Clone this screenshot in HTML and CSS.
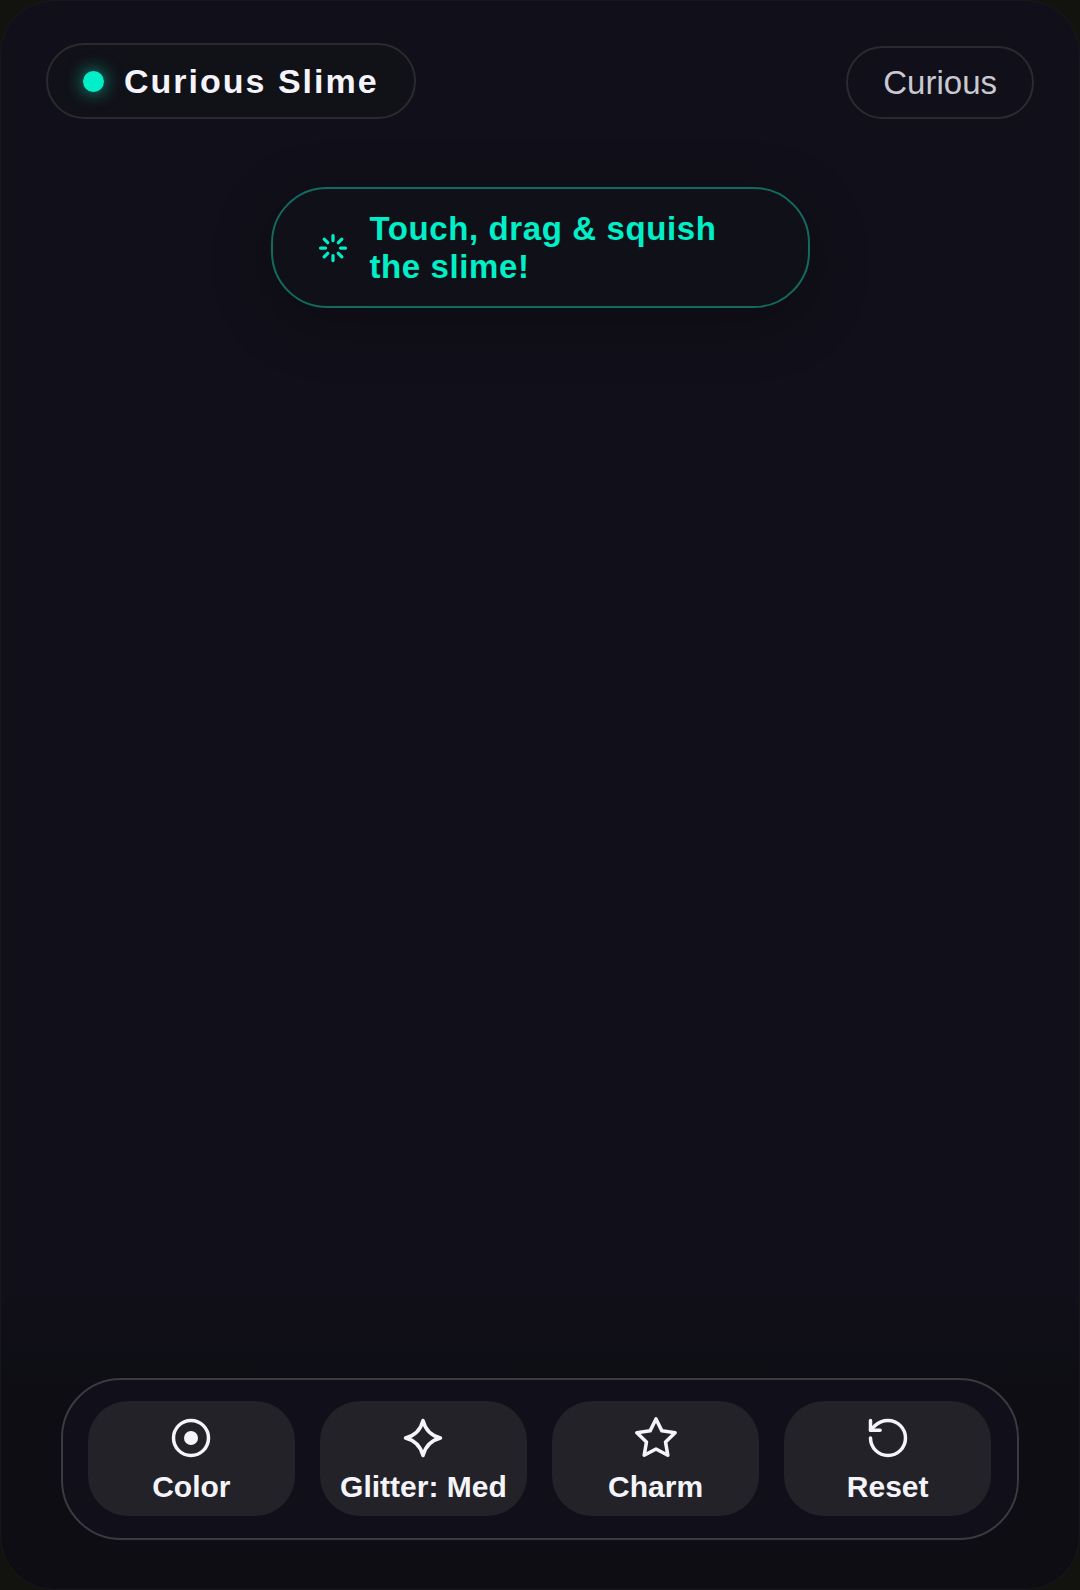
FILE: index.html
```html
<!DOCTYPE html>
<html lang="en">
<head>
    <meta charset="UTF-8">
    <meta name="viewport" content="width=device-width, initial-scale=1.0">
    <title>Curious Slime</title>
    <link rel="stylesheet" href="styles.css">
</head>
<body>

<div class="frame">
    <div class="top">
        <div class="name-pill">
            <span class="dot"></span>
            <span class="name">Curious Slime</span>
        </div>
        <div class="mood-pill">Curious</div>
    </div>

    <div class="hint">
        <svg class="hint-icon" viewBox="0 0 24 24" fill="none" stroke="currentColor" stroke-width="2.6" stroke-linecap="round">
            <path d="M12 2v4"/>
            <path d="M12 18v4"/>
            <path d="M4.93 4.93l2.83 2.83"/>
            <path d="M16.24 16.24l2.83 2.83"/>
            <path d="M2 12h4"/>
            <path d="M18 12h4"/>
            <path d="M4.93 19.07l2.83-2.83"/>
            <path d="M16.24 7.76l2.83-2.83"/>
        </svg>
        <span class="hint-text">Touch, drag &amp; squish the slime!</span>
    </div>

    <div class="toolbar">
        <button class="tool">
            <svg class="tool-icon" viewBox="0 0 24 24" fill="none" stroke="currentColor" stroke-width="2" stroke-linecap="round" stroke-linejoin="round">
                <circle cx="12" cy="12" r="10"/>
                <circle cx="12" cy="12" r="4" fill="currentColor" stroke="none"/>
            </svg>
            Color
        </button>
        <button class="tool">
            <svg class="tool-icon" viewBox="0 0 24 24" fill="none" stroke="currentColor" stroke-width="2" stroke-linecap="round" stroke-linejoin="round">
                <path d="M12 2Q14 10 22 12Q14 14 12 22Q10 14 2 12Q10 10 12 2Z"/>
            </svg>
            Glitter: Med
        </button>
        <button class="tool">
            <svg class="tool-icon" viewBox="1 1 22 22" fill="none" stroke="currentColor" stroke-width="1.85" stroke-linecap="round" stroke-linejoin="round">
                <path d="M12 2l3.09 6.26L22 9.27l-5 4.87 1.18 6.88L12 17.77l-6.18 3.25L7 14.14 2 9.27l6.91-1.01L12 2z"/>
            </svg>
            Charm
        </button>
        <button class="tool">
            <svg class="tool-icon" viewBox="0 0 24 24" fill="none" stroke="currentColor" stroke-width="2" stroke-linecap="round" stroke-linejoin="round">
                <path d="M2 12a10 10 0 1 0 10-10 10.8 10.8 0 0 0-7.5 3L2 7.5"/>
                <path d="M2 2v5.5h5.5"/>
            </svg>
            Reset
        </button>
    </div>
</div>

</body>
</html>
```

FILE: styles.css
```css
* {
    box-sizing: border-box;
}
html, body {
    margin: 0;
    height: 100%;
    background-color: #12120f;
}
body {
    font-family: "Liberation Sans", Arial, sans-serif;
}
.frame {
    display: flex;
    flex-direction: column;
    height: 1590px;
    padding: 42px 45px 49px 45px;
    border-radius: 54px;
    border: 1px solid #18181c;
    background: linear-gradient(to bottom, #11101a 0%, #11101a 81%, #0d0d13 88%, #0d0d13 100%);
    overflow: hidden;
}
.top {
    display: flex;
    justify-content: space-between;
    align-items: flex-end;
}
.name-pill {
    display: flex;
    align-items: center;
    gap: 20px;
    height: 76px;
    padding: 0 35px 0 35px;
    border: 2px solid #2a2a30;
    border-radius: 38px;
    background-color: #111118;
}
.dot {
    width: 21px;
    height: 21px;
    border-radius: 50%;
    background-color: #00efc9;
    box-shadow: 0 0 18px rgba(0, 239, 201, 0.7);
}
.name {
    font-size: 34px;
    font-weight: bold;
    letter-spacing: 2px;
    color: #f4f4fa;
}
.mood-pill {
    display: flex;
    align-items: center;
    height: 73px;
    padding: 0 35px;
    border: 2px solid #2a2a30;
    border-radius: 37px;
    font-size: 33px;
    color: #c9c9d2;
}
.hint {
    display: flex;
    align-items: center;
    gap: 22px;
    align-self: center;
    width: 539px;
    height: 121px;
    margin-top: 68px;
    padding: 0 45px;
    border: 2px solid #136a5f;
    border-radius: 56px;
    background-color: #101018;
    box-shadow: 0 14px 60px rgba(0, 0, 0, 0.28);
    color: #00efc9;
}
.hint-icon {
    flex: none;
    width: 30px;
    height: 30px;
}
.hint-text {
    font-size: 33px;
    font-weight: bold;
    line-height: 38px;
    letter-spacing: 0.6px;
}
.toolbar {
    display: flex;
    gap: 25.5px;
    align-self: center;
    width: 958px;
    height: 162px;
    margin-top: auto;
    padding: 21px 26px 22px 25px;
    border: 2px solid #3a3a40;
    border-radius: 60px;
    background-color: #11101a;
}
.tool {
    display: flex;
    flex: 1;
    flex-direction: column;
    align-items: center;
    gap: 11px;
    padding: 16px 0 0;
    border: none;
    border-radius: 40px;
    background-color: #222228;
    font-family: inherit;
    font-size: 30px;
    font-weight: bold;
    color: #f4f4fa;
}
.tool-icon {
    width: 42px;
    height: 42px;
}
```
